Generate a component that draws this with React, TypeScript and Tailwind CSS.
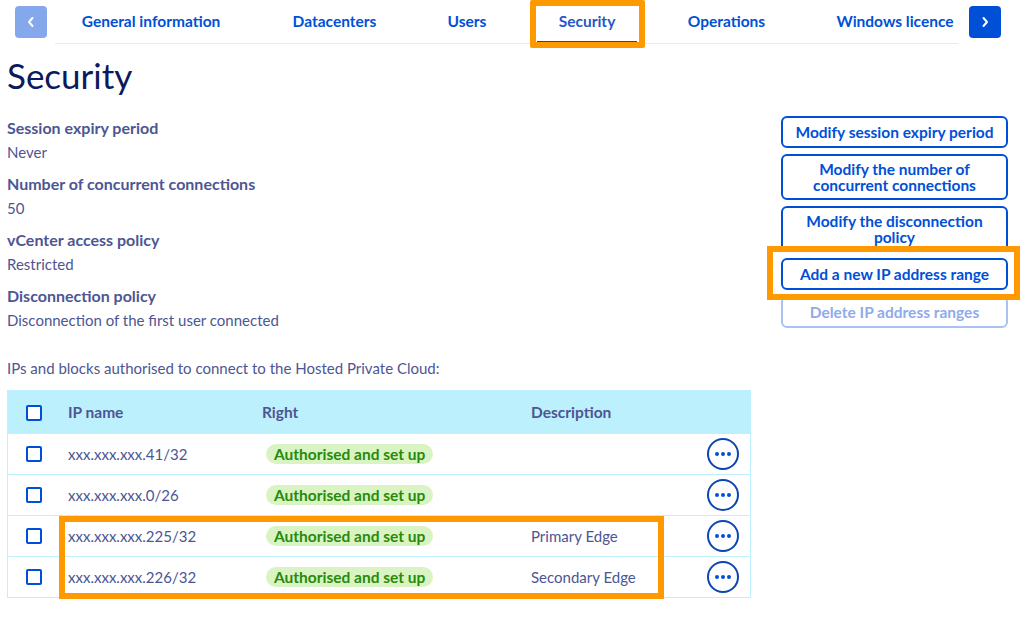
import React from "react";

const tabs: [string, string][] = [
  ["General information", "w-[182px]"],
  ["Datacenters", "w-[125px]"],
  ["Users", "w-[80px]"],
  ["Security", "w-[100px]"],
  ["Operations", "w-[119px]"],
  ["Windows licence", "w-[158px]"],
];

const info = [
  ["Session expiry period", "Never"],
  ["Number of concurrent connections", "50"],
  ["vCenter access policy", "Restricted"],
  ["Disconnection policy", "Disconnection of the first user connected"],
];

const rows = [
  ["xxx.xxx.xxx.41/32", ""],
  ["xxx.xxx.xxx.0/26", ""],
  ["xxx.xxx.xxx.225/32", "Primary Edge"],
  ["xxx.xxx.xxx.226/32", "Secondary Edge"],
];

function Checkbox() {
  return <span className="block w-[16px] h-[16px] border-2 border-[#0050d7] rounded-[2px] bg-white" />;
}

function Chevron({ dir }: { dir: "l" | "r" }) {
  return (
    <svg width="10" height="12" viewBox="0 0 10 12" fill="none">
      <path
        d={dir === "l" ? "M6.5 2 L3 6 L6.5 10" : "M3.5 2 L7 6 L3.5 10"}
        stroke="white"
        strokeWidth="2"
        strokeLinecap="round"
        strokeLinejoin="round"
      />
    </svg>
  );
}

export default function App() {
  return (
    <div
      className="relative w-[1026px] h-[623px] bg-white overflow-hidden text-[#4d5693]"
      style={{ fontFamily: "'Source Sans Pro', Lato, 'Noto Sans', sans-serif" }}
    >
      {/* Tabs */}
      <div className="flex items-start pt-[6px] h-[48px]">
        <button className="ml-[15px] w-[32px] h-[32px] rounded-[4px] bg-[#85a8ec] flex items-center justify-center">
          <Chevron dir="l" />
        </button>
        <div className="ml-[8px] -mt-[6px] w-[903px] h-[44px] flex items-stretch border-b border-[#e3ecf6] pl-[5px] gap-[30px]">
          {tabs.map(([t, w]) => (
            <div
              key={t}
              className={`${w} shrink-0 pt-[2px] flex items-center justify-center text-[15.5px] font-bold text-[#0050d7] whitespace-nowrap ${
                t === "Security" ? "border-b-2 border-[#0050d7] text-[#2756c7]" : "border-b-2 border-transparent"
              }`}
            >
              {t}
            </div>
          ))}
        </div>
        <button className="ml-[11px] w-[32px] h-[32px] rounded-[4px] bg-[#0050d7] flex items-center justify-center">
          <Chevron dir="r" />
        </button>
      </div>

      <div className="px-[7px]">
        <h1 className="mt-[5px] text-[35px] leading-[44px] text-[#0b1a5c] font-normal">Security</h1>

        <div className="flex mt-[19px]">
          <div className="w-[744px]">
            {info.map(([l, v]) => (
              <div key={l} className="mb-[8px] text-[15px] leading-[24px]">
                <div className="font-bold text-[16px]">{l}</div>
                <div>{v}</div>
              </div>
            ))}
            <div className="mt-[24px] text-[15px] leading-[24px]">
              IPs and blocks authorised to connect to the Hosted Private Cloud:
            </div>

            <div className="mt-[10px] border border-[#bef1ff]">
              <div className="h-[42px] pt-[2px] bg-[#bdf0fd] flex items-center text-[15.5px] font-bold">
                <div className="w-[60px] pl-[18px]">
                  <Checkbox />
                </div>
                <div className="w-[194px]">IP name</div>
                <div className="w-[269px]">Right</div>
                <div>Description</div>
              </div>
              {rows.map(([ip, d]) => (
                <div key={ip} className="h-[41px] flex items-center border-t border-[#bef1ff] text-[15px]">
                  <div className="w-[60px] pl-[18px]">
                    <Checkbox />
                  </div>
                  <div className="w-[194px]">{ip}</div>
                  <div className="w-[269px] pl-[4px]">
                    <span className="inline-flex items-center h-[20px] px-[8px] rounded-full bg-[#d9f4c2] text-[#288a0a] font-bold text-[15.5px]">
                      Authorised and set up
                    </span>
                  </div>
                  <div className="flex-1">{d}</div>
                  <div className="w-[43px] pr-[11px] flex justify-end">
                    <span className="w-[32px] h-[32px] rounded-full border-2 border-[#0b45b4] flex items-center justify-center gap-[2px]">
                      <span className="w-[4px] h-[4px] rounded-full bg-[#0050d7]" />
                      <span className="w-[4px] h-[4px] rounded-full bg-[#0050d7]" />
                      <span className="w-[4px] h-[4px] rounded-full bg-[#0050d7]" />
                    </span>
                  </div>
                </div>
              ))}
            </div>
          </div>

          <div className="ml-[30px] w-[227px] flex flex-col gap-[6px] text-[15.5px] font-bold text-[#0050d7]">
            <div className="h-[32px] border-2 border-[#0050d7] rounded-[6px] flex items-center justify-center text-center leading-[16px]">
              Modify session expiry period
            </div>
            <div className="h-[46px] border-2 border-[#0050d7] rounded-[6px] flex items-center justify-center text-center leading-[16px]">
              Modify the number of
              <br />
              concurrent connections
            </div>
            <div className="h-[46px] border-2 border-[#0050d7] rounded-[6px] flex items-center justify-center text-center leading-[16px]">
              Modify the disconnection
              <br />
              policy
            </div>
            <div className="h-[32px] border-2 border-[#0050d7] rounded-[6px] flex items-center justify-center text-center leading-[16px]">
              Add a new IP address range
            </div>
            <div className="h-[32px] border-2 border-[#a9c2f2] rounded-[6px] flex items-center justify-center text-center leading-[16px] text-[#8eabea]">
              Delete IP address ranges
            </div>
          </div>
        </div>
      </div>

      {/* Annotation boxes */}
      <div className="absolute left-[530px] top-0 w-[115px] h-[48px] border-[6px] border-[#ff9900] rounded-[2px]" />
      <div className="absolute left-[767px] top-[246px] w-[253px] h-[54px] border-[6px] border-[#ff9900]" />
      <div className="absolute left-[59px] top-[516px] w-[605px] h-[83px] border-[6px] border-[#ff9900]" />
    </div>
  );
}
